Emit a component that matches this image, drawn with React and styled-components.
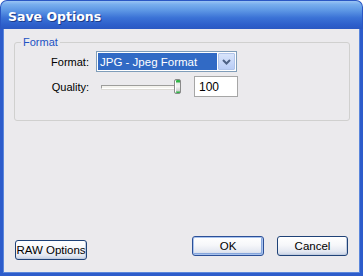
import React from 'react'
import styled, { createGlobalStyle } from 'styled-components'

const Global = createGlobalStyle`
  html, body {
    margin: 0;
    padding: 0;
    background: #ffffff;
  }
  * {
    box-sizing: border-box;
  }
`

const Window = styled.div`
  width: 363px;
  height: 276px;
  display: flex;
  flex-direction: column;
  font-family: 'Liberation Sans', Arial, sans-serif;
  font-size: 11px;
  color: #000;
`

const TitleBar = styled.div`
  height: 29px;
  flex: none;
  display: flex;
  align-items: center;
  padding: 2px 0 0 7px;
  border-radius: 7px 7px 0 0;
  border: 1px solid #2a57c4;
  border-bottom: none;
  background: linear-gradient(
    to bottom,
    #9ac4f4 0%,
    #78aeee 12%,
    #5b95e4 35%,
    #3b72d6 60%,
    #2d5fcb 85%,
    #2a58c2 100%
  );
  color: #fff;
  font-family: 'DejaVu Sans', sans-serif;
  font-weight: bold;
  font-size: 12.5px;
  text-shadow: 1px 1px 0 #1a3a8a;
`

const Client = styled.div`
  flex: 1;
  display: flex;
  flex-direction: column;
  background: #ebeaed;
  border: 3px solid #2d5ccb;
  border-top: none;
  box-shadow: inset 1px 0 0 #5a86dc, inset -1px 0 0 #5a86dc, inset 0 -1px 0 #5a86dc;
  padding: 7px 10px 13px 11px;
`

const Group = styled.fieldset`
  margin: 0;
  padding: 3px 0 23px 0;
  border: 1px solid #d0d0cf;
  border-radius: 3px;
  display: grid;
  grid-template-columns: 74px auto;
  column-gap: 7px;
  row-gap: 4px;
  align-items: center;
  justify-content: start;
`

const Legend = styled.legend`
  color: #2152c4;
  padding: 0 2px;
  margin-left: 6px;
  font-size: 11px;
`

const Label = styled.label`
  text-align: right;
`

const Select = styled.div`
  width: 141px;
  height: 21px;
  display: flex;
  align-items: stretch;
  background: #fff;
  border: 1px solid #7f9db9;
  padding: 1px;
`

const SelectValue = styled.div`
  flex: 1;
  background: #316ac5;
  color: #fff;
  display: flex;
  align-items: center;
  padding-left: 2px;
  font-size: 11.5px;
  margin-right: 1px;
`

const DropButton = styled.div`
  width: 17px;
  display: flex;
  align-items: center;
  justify-content: center;
  background: linear-gradient(to bottom, #d8e4fb, #b9cdf6);
  border: 1px solid #b0c4ea;
  border-radius: 1px;
`

const QualityRow = styled.div`
  display: flex;
  align-items: center;
  gap: 8px;
`

const Slider = styled.div`
  position: relative;
  width: 90px;
  height: 21px;
  display: flex;
  align-items: center;
  padding: 0 5px;
`

const Track = styled.div`
  flex: 1;
  height: 4px;
  border-top: 1px solid #9d9d9b;
  border-left: 1px solid #9d9d9b;
  border-bottom: 1px solid #ffffff;
  border-right: 1px solid #ffffff;
  background: #f4f3ee;
  box-shadow: 0 1px 0 #dcdad5;
`

const Thumb = styled.div`
  position: absolute;
  left: ${p => p.pos}px;
  top: 3px;
  width: 7px;
  height: 15px;
  border-radius: 2px;
  border: 1px solid #8a8a8a;
  background: linear-gradient(
    to bottom,
    #2fb546 0px,
    #2fb546 2px,
    #e8e8e8 3px,
    #f4f4f4 50%,
    #cfcfcf 11px,
    #2fb546 12px,
    #2fb546 100%
  );
  box-shadow: inset 1px 0 0 #fff;
`

const TextInput = styled.div`
  width: 44px;
  height: 21px;
  border: 1px solid #a6a6a6;
  background: #fff;
  display: flex;
  align-items: center;
  padding-left: 4px;
  font-size: 12px;
`

const Spacer = styled.div`
  flex: 1;
`

const ButtonRow = styled.div`
  display: flex;
  align-items: flex-start;
  padding-left: 1px;
`

const Button = styled.div`
  width: ${p => p.w}px;
  height: 20px;
  flex: none;
  margin-top: ${p => p.offset || 0}px;
  margin-left: ${p => p.gap || 0}px;
  display: flex;
  align-items: center;
  justify-content: center;
  white-space: nowrap;
  border: 1px solid ${p => (p.primary ? '#2b4f97' : '#1f4277')};
  border-radius: 3px;
  background: linear-gradient(to bottom, #ffffff 0%, #f6f7fa 45%, #e4e8f1 80%, #c9d3e6 100%);
  box-shadow: ${p =>
    p.primary
      ? 'inset 0 0 0 1px #a9c3ee, inset -1px -1px 0 1px #86a6dc'
      : 'inset -1px -1px 0 #c2cde0'};
  font-size: 11.5px;
`

function Chevron() {
  return (
    <svg width="9" height="6" viewBox="0 0 9 6">
      <path d="M1 1 L4.5 4.5 L8 1" stroke="#4d6185" strokeWidth="2" fill="none" />
    </svg>
  )
}

export default function App() {
  return (
    <>
      <Global />
      <Window>
        <TitleBar>Save Options</TitleBar>
        <Client>
          <Group>
            <Legend>Format</Legend>
            <Label>Format:</Label>
            <Select>
              <SelectValue>JPG - Jpeg Format</SelectValue>
              <DropButton>
                <Chevron />
              </DropButton>
            </Select>
            <Label>Quality:</Label>
            <QualityRow>
              <Slider>
                <Track />
                <Thumb pos={78} />
              </Slider>
              <TextInput>100</TextInput>
            </QualityRow>
          </Group>
          <Spacer />
          <ButtonRow>
            <Button w={72} offset={4}>RAW Options</Button>
            <Button w={72} gap={105} primary>OK</Button>
            <Button w={71} gap={13}>Cancel</Button>
          </ButtonRow>
        </Client>
      </Window>
    </>
  )
}
